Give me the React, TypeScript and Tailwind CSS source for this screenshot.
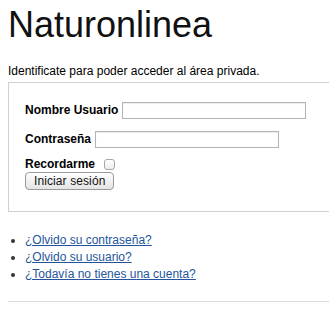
import React from "react";

export default function App() {
  return (
    <div className="w-[329px] h-[323px] overflow-hidden bg-white">
      <div className="w-[380px] pl-2 font-['Liberation_Sans',Arial,sans-serif] text-[12px] text-black">
        <h1 className="pt-[4px] text-[36px] leading-[42px] text-[#111]">Naturonlinea</h1>
        <p className="mt-[18px] leading-[14px]">Identificate para poder acceder al área privada.</p>

        <div className="mt-[4px] border border-[#d0d0d0] pl-[16px] pt-[18px] pb-[21px]">
          <div className="flex items-center gap-[4px] h-[18px]">
            <span className="font-bold">Nombre Usuario</span>
            <input className="w-[184px] h-[17px] border border-[#b4b4b4] shadow-[inset_0_1px_1px_rgba(0,0,0,0.08)] outline-none" />
          </div>
          <div className="mt-[11px] flex items-center gap-[4px] h-[18px]">
            <span className="font-bold">Contraseña</span>
            <input
              type="password"
              className="w-[184px] h-[17px] border border-[#b4b4b4] shadow-[inset_0_1px_1px_rgba(0,0,0,0.08)] outline-none"
            />
          </div>
          <div className="mt-[9px] flex items-center gap-[9px] h-[14px]">
            <span className="font-bold">Recordarme</span>
            <span className="w-[11px] h-[11px] rounded-[3px] border border-[#a8a8a8] bg-gradient-to-b from-white to-[#ececec]" />
          </div>
          <div className="mt-[1px]">
            <button className="h-[18px] px-[8px] rounded-[4px] border border-[#9a9a9a] bg-gradient-to-b from-white to-[#e4e4e4] text-[12px] leading-[16px] text-[#111] tracking-[0.1px]">
              Iniciar sesión
            </button>
          </div>
        </div>

        <ul className="mt-[20px] pl-[17px] list-disc leading-[17px] marker:text-[#333]">
          <li>
            <a href="#" className="text-[#24559c] underline">¿Olvido su contraseña?</a>
          </li>
          <li>
            <a href="#" className="text-[#24559c] underline">¿Olvido su usuario?</a>
          </li>
          <li>
            <a href="#" className="text-[#24559c] underline">¿Todavía no tienes una cuenta?</a>
          </li>
        </ul>

        <hr className="mt-[18px] border-0 border-t border-[#dcdcdc]" />
      </div>
    </div>
  );
}
